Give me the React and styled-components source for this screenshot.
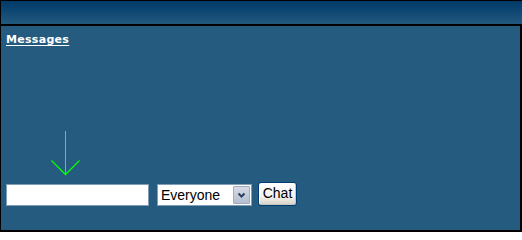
import styled, { createGlobalStyle } from "styled-components";

const GlobalStyle = createGlobalStyle`
  html, body {
    margin: 0;
    padding: 0;
    background: #ffffff;
  }
  * {
    box-sizing: border-box;
  }
`;

const Frame = styled.div`
  width: 522px;
  height: 232px;
  display: flex;
  flex-direction: column;
  border-top: 1px solid #000;
  border-left: 1px solid #000;
  background: #255b7e;
`;

const TitleBar = styled.div`
  height: 25px;
  flex: none;
  background: linear-gradient(to bottom, #023a67 0%, #0a4471 35%, #24597e 100%);
  border-bottom: 2px solid #000;
`;

const Body = styled.div`
  flex: 1;
  display: flex;
  flex-direction: column;
  padding: 7px 6px 0 5px;
  border-right: 2px solid #000;
  border-bottom: 2px solid #000;
`;

const MessagesLink = styled.a`
  align-self: flex-start;
  font-family: "DejaVu Sans", Verdana, sans-serif;
  font-weight: bold;
  font-size: 11px;
  line-height: 14px;
  letter-spacing: 0.3px;
  color: #ffffff;
  text-decoration: underline;
  text-underline-offset: 2px;
  cursor: pointer;
`;

const MessageArea = styled.div`
  flex: 1;
  display: flex;
  flex-direction: column;
  justify-content: flex-end;
  padding: 0 0 6px 45px;
`;

const ChatForm = styled.form`
  display: flex;
  align-items: flex-end;
  height: 24px;
  margin-bottom: 24px;
`;

const TextField = styled.input`
  width: 143px;
  height: 22px;
  margin: 0 8px 0 0;
  padding: 2px 3px;
  border: 1px solid #7f9db9;
  background: #ffffff;
  font-family: "Liberation Sans", Arial, sans-serif;
  font-size: 13px;
  outline: none;
`;

const SelectBox = styled.div`
  display: flex;
  width: 95px;
  height: 22px;
  margin-right: 6px;
  border: 1px solid #7f9db9;
  background: #ffffff;
`;

const SelectField = styled.select`
  flex: 1;
  min-width: 0;
  appearance: none;
  border: none;
  outline: none;
  background: transparent;
  padding: 0 0 0 3px;
  font-family: "Liberation Sans", Arial, sans-serif;
  font-size: 14px;
  color: #000;
`;

const DropButton = styled.span`
  width: 17px;
  margin: 1px;
  display: flex;
  align-items: center;
  justify-content: center;
  background: linear-gradient(to bottom, #d6dce6, #b4bfd0);
  border: 1px solid #9fadc3;
  border-radius: 1px;
  pointer-events: none;
`;

const ChatButton = styled.button`
  width: 39px;
  height: 24px;
  padding: 0 0 2px;
  border: 1px solid #003c74;
  border-radius: 3px;
  background: linear-gradient(to bottom, #ffffff 0%, #f4f4f0 60%, #d6d0c5 100%);
  box-shadow: inset -1px -1px 0 #c9c6bd, inset 1px 1px 0 #ffffff;
  font-family: "Liberation Sans", Arial, sans-serif;
  font-size: 14px;
  color: #000;
  cursor: pointer;
`;

function DownArrow() {
  return (
    <svg width="30" height="46" viewBox="0 0 30 46" style={{ display: "block" }}>
      <line
        x1="14.5"
        y1="1"
        x2="14.5"
        y2="44"
        stroke="#40e040"
        strokeWidth="1"
        shapeRendering="crispEdges"
      />
      <polyline
        points="0.5,30.5 14.5,44.5 28.5,30.5"
        fill="none"
        stroke="#00ff00"
        strokeWidth="1.3"
      />
    </svg>
  );
}

function Chevron() {
  return (
    <svg width="9" height="7" viewBox="0 0 9 7">
      <polyline points="1.5,1.5 4.5,4.5 7.5,1.5" fill="none" stroke="#2e3f5e" strokeWidth="2" />
    </svg>
  );
}

export default function App() {
  return (
    <>
      <GlobalStyle />
      <Frame>
        <TitleBar />
        <Body>
          <MessagesLink>Messages</MessagesLink>
          <MessageArea>
            <DownArrow />
          </MessageArea>
          <ChatForm onSubmit={(e) => e.preventDefault()}>
            <TextField type="text" />
            <SelectBox>
              <SelectField defaultValue="everyone">
                <option value="everyone">Everyone</option>
              </SelectField>
              <DropButton>
                <Chevron />
              </DropButton>
            </SelectBox>
            <ChatButton type="submit">Chat</ChatButton>
          </ChatForm>
        </Body>
      </Frame>
    </>
  );
}
